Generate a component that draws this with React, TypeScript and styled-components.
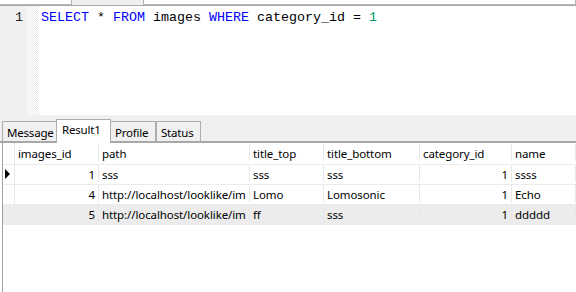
import styled, { createGlobalStyle } from "styled-components";

const GlobalStyle = createGlobalStyle`
  body {
    margin: 0;
    background: #ffffff;
    font-family: "Noto Sans", "Liberation Sans", sans-serif;
  }
`;

const Page = styled.div`
  width: 576px;
  height: 292px;
  display: flex;
  flex-direction: column;
  overflow: hidden;
  background: #ffffff;
`;

const TopStrip = styled.div`
  height: 5px;
  display: flex;
  border-bottom: 1px solid #a9a9a9;
  background: #f0f0f0;
`;

const TopPiece = styled.div<{ w: number; left?: boolean }>`
  width: ${(p) => p.w}px;
  background: #ffffff;
  border-bottom: 1px solid #b5b5b5;
  border-left: ${(p) => (p.left ? "1px solid #b5b5b5" : "none")};
  border-right: 1px solid #b5b5b5;
`;

const TopGap = styled.div`
  flex: 1;
`;

const Editor = styled.div`
  height: 109px;
  display: flex;
`;

const Gutter = styled.div`
  width: 27px;
  background: #f0f0f0;
  color: #222;
  font-family: "Liberation Mono", monospace;
  font-size: 13.33px;
  text-align: right;
  padding-right: 4px;
  box-sizing: border-box;
  padding-top: 4px;
`;

const FoldStrip = styled.div`
  width: 12px;
  background-color: #ffffff;
  background-image: repeating-conic-gradient(#ececec 0 25%, #ffffff 0 50%);
  background-size: 2px 2px;
`;

const Code = styled.div`
  flex: 1;
  padding: 4px 0 0 2px;
  font-family: "Liberation Mono", "Courier New", monospace;
  font-size: 13.33px;
  color: #000;
  white-space: pre;
`;

const Kw = styled.span`
  color: #0000ff;
`;

const Num = styled.span`
  color: #009966;
`;

const TabBar = styled.div`
  height: 28px;
  background: #f0f0f0;
  display: flex;
  align-items: flex-end;
  padding-left: 2px;
  box-sizing: border-box;
  border-bottom: 2px solid #a8a8a8;
`;

const Tab = styled.div<{ active?: boolean; w: number }>`
  width: ${(p) => p.w}px;
  height: ${(p) => (p.active ? 24 : 20)}px;
  box-sizing: border-box;
  border: 1px solid #adadad;
  border-bottom: none;
  margin-left: ${(p) => (p.active ? -1 : 0)}px;
  margin-right: ${(p) => (p.active ? -1 : 0)}px;
  background: ${(p) => (p.active ? "#ffffff" : "#f0f0f0")};
  position: relative;
  z-index: ${(p) => (p.active ? 1 : 0)};
  margin-bottom: ${(p) => (p.active ? -2 : 0)}px;
  font-size: 11.5px;
  letter-spacing: -0.2px;
  color: #000;
  display: flex;
  align-items: ${(p) => (p.active ? "flex-start" : "center")};
  padding-top: ${(p) => (p.active ? 2 : 1)}px;
  padding-left: ${(p) => (p.active ? 5 : 4)}px;
  white-space: nowrap;
`;

const Grid = styled.div`
  flex: 1;
  border-left: 1px solid #a0a0a0;
  margin-left: 2px;
  font-size: 11.5px;
  letter-spacing: -0.1px;
  color: #000;
`;

const cols = "12px 84px 151px 74px 96px 92px 1fr";

const Row = styled.div<{ shade?: boolean; head?: boolean }>`
  display: grid;
  grid-template-columns: ${cols};
  height: ${(p) => (p.head ? 22 : 20)}px;
  background: ${(p) => (p.shade ? "#ececec" : "#ffffff")};
  border-bottom: 1px solid #ececec;
  box-sizing: border-box;
`;

const Cell = styled.div<{ right?: boolean }>`
  display: flex;
  align-items: center;
  justify-content: ${(p) => (p.right ? "flex-end" : "flex-start")};
  padding: 2px 3px 0;
  border-right: 1px solid #e8e8e8;
  white-space: nowrap;
  overflow: hidden;
  min-width: 0;
`;

const Indicator = styled.div`
  display: flex;
  align-items: center;
  padding-left: 2px;
  padding-top: 1px;
  border-right: 1px solid #e8e8e8;
`;

const Arrow = styled.div`
  width: 0;
  height: 0;
  border-top: 5px solid transparent;
  border-bottom: 5px solid transparent;
  border-left: 5px solid #000;
`;

const headers = ["images_id", "path", "title_top", "title_bottom", "category_id", "name"];

const rows = [
  { id: 1, path: "sss", top: "sss", bottom: "sss", cat: 1, name: "ssss" },
  { id: 4, path: "http://localhost/looklike/im", top: "Lomo", bottom: "Lomosonic", cat: 1, name: "Echo" },
  { id: 5, path: "http://localhost/looklike/im", top: "ff", bottom: "sss", cat: 1, name: "ddddd" },
];

export default function App() {
  return (
    <Page>
      <GlobalStyle />
      <TopStrip>
        <TopPiece w={71} />
        <TopGap />
        <TopPiece w={431} left />
      </TopStrip>
      <Editor>
        <Gutter>1</Gutter>
        <FoldStrip />
        <Code>
          <Kw>SELECT</Kw> * <Kw>FROM</Kw> images <Kw>WHERE</Kw> category_id = <Num>1</Num>
        </Code>
      </Editor>
      <TabBar>
        <Tab w={55}>Message</Tab>
        <Tab w={55} active>Result1</Tab>
        <Tab w={46}>Profile</Tab>
        <Tab w={45}>Status</Tab>
      </TabBar>
      <Grid>
        <Row head>
          <Indicator />
          {headers.map((h) => (
            <Cell key={h}>{h}</Cell>
          ))}
          <Cell />
        </Row>
        {rows.map((r, i) => (
          <Row key={r.id} shade={i === 2}>
            <Indicator>{i === 0 && <Arrow />}</Indicator>
            <Cell right>{r.id}</Cell>
            <Cell>{r.path}</Cell>
            <Cell>{r.top}</Cell>
            <Cell>{r.bottom}</Cell>
            <Cell right>{r.cat}</Cell>
            <Cell>{r.name}</Cell>
            <Cell />
          </Row>
        ))}
      </Grid>
    </Page>
  );
}
